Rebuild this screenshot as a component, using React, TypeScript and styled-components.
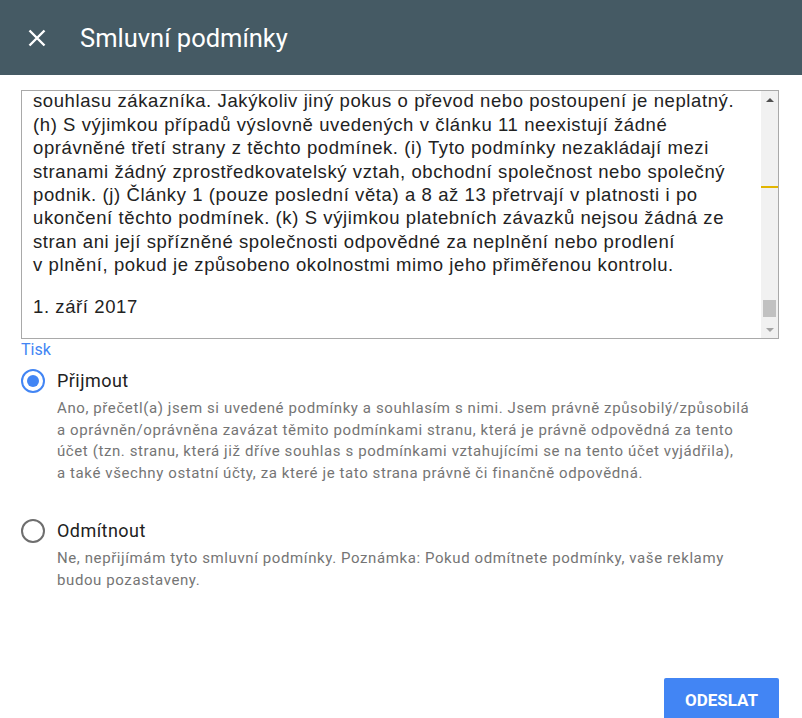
import React from "react";
import styled, { createGlobalStyle } from "styled-components";

const GlobalStyle = createGlobalStyle`
  html, body {
    margin: 0;
    padding: 0;
    background: #ffffff;
    font-family: Roboto, "Noto Sans", sans-serif;
  }
`;

const Page = styled.div`
  width: 802px;
  height: 718px;
  overflow: hidden;
  display: flex;
  flex-direction: column;
`;

const Header = styled.header`
  height: 75px;
  flex-shrink: 0;
  background: #455a64;
  display: flex;
  align-items: center;
  padding-left: 26px;
  gap: 33px;
  box-sizing: border-box;
`;

const CloseButton = styled.button`
  width: 21px;
  height: 21px;
  padding: 0;
  border: none;
  background: transparent;
  display: flex;
  align-items: center;
  justify-content: center;
  cursor: pointer;
`;

const Title = styled.h1`
  margin: 0;
  color: #ffffff;
  font-size: 25.5px;
  font-weight: 400;
`;

const Body = styled.main`
  flex: 1;
  display: flex;
  flex-direction: column;
  padding: 15px 23px 0 21px;
`;

const TermsBox = styled.div`
  height: 249px;
  box-sizing: border-box;
  border: 1px solid #a9a9a9;
  display: flex;
  position: relative;
`;

const TermsText = styled.div`
  flex: 1;
  overflow: hidden;
  display: flex;
  flex-direction: column;
  justify-content: flex-end;
  padding: 0 10px 20px 11px;
  font-family: "Liberation Sans", Arial, sans-serif;
  font-size: 18.5px;
  letter-spacing: 0.59px;
  line-height: 23.4px;
  color: #222222;
  white-space: nowrap;
`;

const Paragraph = styled.p`
  margin: 0 0 18px;
  &:last-child {
    margin-bottom: 0;
  }
`;

const Scrollbar = styled.div`
  width: 17px;
  background: #f1f1f1;
  display: flex;
  flex-direction: column;
  position: relative;
`;

const ScrollArrow = styled.div<{ $dir: "up" | "down"; $muted?: boolean }>`
  height: 17px;
  display: flex;
  align-items: center;
  justify-content: center;
  &::before {
    content: "";
    width: 0;
    height: 0;
    border-left: 4px solid transparent;
    border-right: 4px solid transparent;
    ${(p) =>
      p.$dir === "up"
        ? `border-bottom: 4px solid ${p.$muted ? "#a3a3a3" : "#505050"};`
        : `border-top: 4px solid ${p.$muted ? "#a3a3a3" : "#505050"};`}
  }
`;

const ScrollTrack = styled.div`
  flex: 1;
  display: flex;
  flex-direction: column;
  justify-content: flex-end;
  padding: 0 2px 4px;
`;

const ScrollThumb = styled.div`
  height: 17px;
  background: #c1c1c1;
`;

const SearchMarker = styled.div`
  position: absolute;
  left: 0;
  right: 0;
  top: 95px;
  height: 2px;
  background: #e2b500;
`;

const PrintLink = styled.a`
  margin-top: 1px;
  color: #4285f4;
  font-size: 16px;
  line-height: 19px;
  text-decoration: none;
  align-self: flex-start;
  cursor: pointer;
`;

const Options = styled.div`
  display: flex;
  flex-direction: column;
  gap: 34px;
  margin-top: 10px;
`;

const Option = styled.label`
  display: grid;
  grid-template-columns: 24px 1fr;
  column-gap: 12px;
  row-gap: 5px;
  cursor: pointer;
`;

const Radio = styled.span<{ $checked?: boolean }>`
  width: 24px;
  height: 24px;
  box-sizing: border-box;
  border-radius: 50%;
  border: 2.5px solid ${(p) => (p.$checked ? "#4285f4" : "#6e6e6e")};
  display: flex;
  align-items: center;
  justify-content: center;
  &::after {
    content: "";
    width: 12px;
    height: 12px;
    border-radius: 50%;
    background: ${(p) => (p.$checked ? "#4285f4" : "transparent")};
  }
`;

const OptionLabel = styled.span`
  font-size: 18px;
  letter-spacing: 0.45px;
  line-height: 24px;
  color: #212121;
`;

const OptionDescription = styled.span`
  grid-column: 2;
  font-size: 15px;
  letter-spacing: 0.6px;
  line-height: 21.7px;
  color: #757575;
  white-space: nowrap;
`;

const Footer = styled.div`
  margin-top: auto;
  display: flex;
  justify-content: flex-end;
`;

const SubmitButton = styled.button`
  width: 115px;
  height: 44px;
  margin-bottom: -4px;
  border: none;
  border-radius: 2px;
  background: #4285f4;
  color: #ffffff;
  font-family: Roboto, sans-serif;
  font-size: 17px;
  font-weight: 700;
  cursor: pointer;
`;

const CloseIcon = () => (
  <svg width="18" height="18" viewBox="0 0 18 18">
    <path d="M1.5 1.5 L16.5 16.5 M16.5 1.5 L1.5 16.5" stroke="#ffffff" strokeWidth="2.4" />
  </svg>
);

const termsLines = [
  "souhlasu zákazníka. Jakýkoliv jiný pokus o převod nebo postoupení je neplatný.",
  "(h) S výjimkou případů výslovně uvedených v článku 11 neexistují žádné",
  "oprávněné třetí strany z těchto podmínek. (i) Tyto podmínky nezakládají mezi",
  "stranami žádný zprostředkovatelský vztah, obchodní společnost nebo společný",
  "podnik. (j) Články 1 (pouze poslední věta) a 8 až 13 přetrvají v platnosti i po",
  "ukončení těchto podmínek. (k) S výjimkou platebních závazků nejsou žádná ze",
  "stran ani její spřízněné společnosti odpovědné za neplnění nebo prodlení",
  "v plnění, pokud je způsobeno okolnostmi mimo jeho přiměřenou kontrolu.",
];

const acceptLines = [
  "Ano, přečetl(a) jsem si uvedené podmínky a souhlasím s nimi. Jsem právně způsobilý/způsobilá",
  "a oprávněn/oprávněna zavázat těmito podmínkami stranu, která je právně odpovědná za tento",
  "účet (tzn. stranu, která již dříve souhlas s podmínkami vztahujícími se na tento účet vyjádřila),",
  "a také všechny ostatní účty, za které je tato strana právně či finančně odpovědná.",
];

const declineLines = [
  "Ne, nepřijímám tyto smluvní podmínky. Poznámka: Pokud odmítnete podmínky, vaše reklamy",
  "budou pozastaveny.",
];

const withBreaks = (lines: string[]) =>
  lines.map((line, i) => (
    <React.Fragment key={i}>
      {line}
      {i < lines.length - 1 && <br />}
    </React.Fragment>
  ));

const App: React.FC = () => {
  const [choice, setChoice] = React.useState<"accept" | "decline">("accept");

  return (
    <Page>
      <GlobalStyle />
      <Header>
        <CloseButton aria-label="Zavřít">
          <CloseIcon />
        </CloseButton>
        <Title>Smluvní podmínky</Title>
      </Header>
      <Body>
        <TermsBox>
          <TermsText>
            <Paragraph>{withBreaks(termsLines)}</Paragraph>
            <Paragraph>1. září 2017</Paragraph>
          </TermsText>
          <Scrollbar>
            <ScrollArrow $dir="up" />
            <ScrollTrack>
              <ScrollThumb />
            </ScrollTrack>
            <ScrollArrow $dir="down" $muted />
            <SearchMarker />
          </Scrollbar>
        </TermsBox>
        <PrintLink>Tisk</PrintLink>
        <Options>
          <Option onClick={() => setChoice("accept")}>
            <Radio $checked={choice === "accept"} />
            <OptionLabel>Přijmout</OptionLabel>
            <OptionDescription>{withBreaks(acceptLines)}</OptionDescription>
          </Option>
          <Option onClick={() => setChoice("decline")}>
            <Radio $checked={choice === "decline"} />
            <OptionLabel>Odmítnout</OptionLabel>
            <OptionDescription>{withBreaks(declineLines)}</OptionDescription>
          </Option>
        </Options>
        <Footer>
          <SubmitButton>ODESLAT</SubmitButton>
        </Footer>
      </Body>
    </Page>
  );
};

export default App;
